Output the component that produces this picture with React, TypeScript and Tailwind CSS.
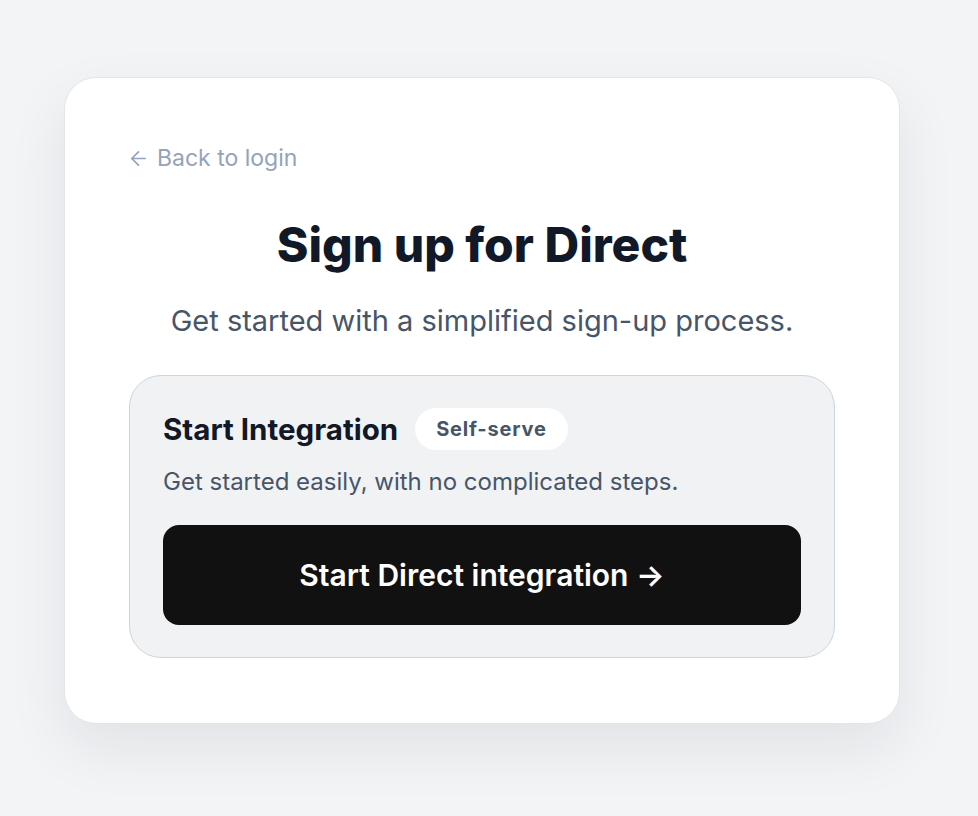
import { ArrowLeft } from "lucide-react";

export default function App() {
  return (
    <div
      className="min-h-screen bg-[#f3f4f6] pt-[77px] pb-24"
      style={{ fontFamily: "Inter, 'Noto Sans', sans-serif" }}
    >
      <div className="ml-16 w-[836px] rounded-[32px] border border-[#e2e5ea] bg-white px-16 pt-16 pb-[65px] shadow-[0_24px_60px_rgba(15,23,42,0.08)]">
        <a href="#" className="flex h-8 w-fit items-center gap-[7px] text-[23px] leading-8 text-[#94a3b8]">
          <ArrowLeft className="-ml-[2px] size-[23px]" strokeWidth={1.8} />
          Back to login
        </a>

        <h1 className="mt-[43px] text-center text-[48px] font-extrabold leading-[56px] text-[#111827]">
          Sign up for Direct
        </h1>
        <p className="mt-[28px] text-center text-[29px] leading-10 text-[#475569]">
          Get started with a simplified sign-up process.
        </p>

        <div className="mt-[34px] rounded-[32px] border border-[#cbd5e1] bg-[#f1f2f4] px-[33px] pt-8 pb-8">
          <div className="flex items-center gap-[17px]">
            <h2 className="text-[29.5px] font-bold leading-10 text-[#111827]">Start Integration</h2>
            <span className="rounded-full bg-white px-[21px] py-[8px] text-[20px] font-bold leading-[26px] tracking-[0.04em] text-[#475569]">
              Self-serve
            </span>
          </div>
          <p className="mt-4 text-[24px] leading-8 text-[#475569]">
            Get started easily, with no complicated steps.
          </p>
          <button className="mt-[27px] flex h-[100px] w-full items-center justify-center rounded-2xl bg-[#111111] text-[30px] font-semibold text-white">
            Start Direct integration →
          </button>
        </div>
      </div>
    </div>
  );
}
